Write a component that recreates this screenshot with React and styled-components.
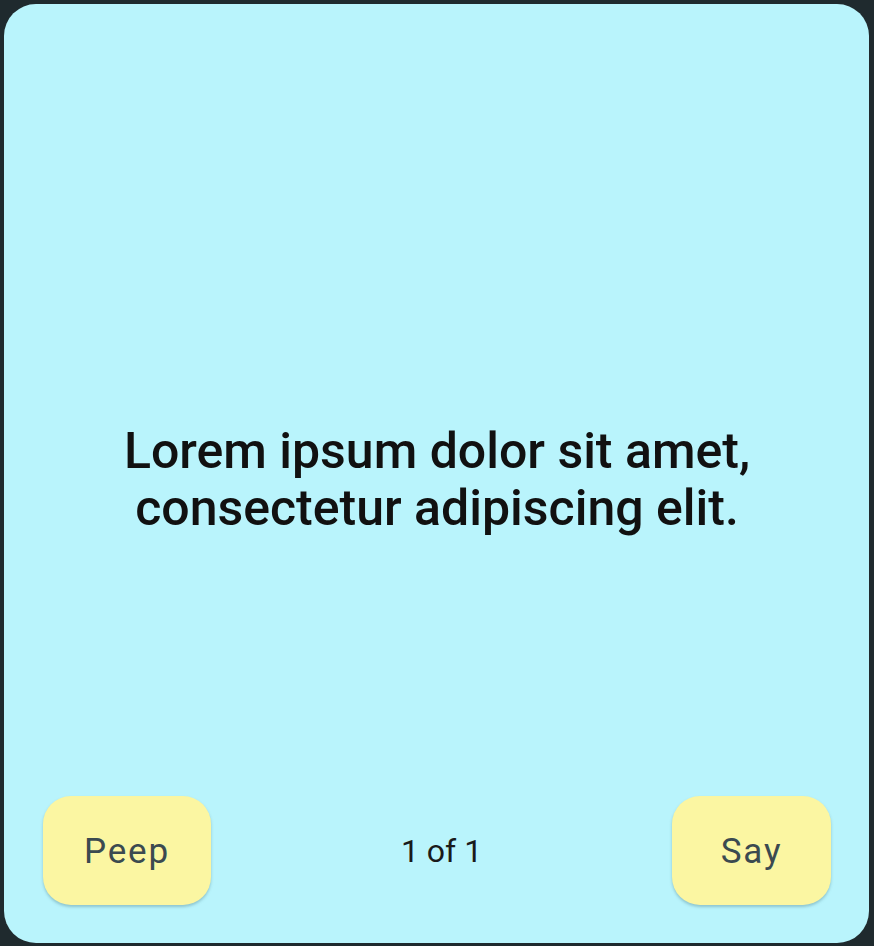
import React from "react";
import styled, { createGlobalStyle } from "styled-components";

const Global = createGlobalStyle`
  html, body { margin: 0; padding: 0; background: #1f2a2e; }
  body { font-family: Roboto, "Noto Sans", sans-serif; }
  #root { padding: 4px 5px 3px 4px; }
`;

const Card = styled.div`
  height: 939px;
  box-sizing: border-box;
  background: #b9f4fc;
  border-radius: 32px;
  padding: 38px 38px 38px 39px;
  display: flex;
  flex-direction: column;
`;

const Spacer = styled.div`
  height: 122px;
  flex: none;
`;

const Body = styled.div`
  flex: 1;
  display: flex;
  align-items: center;
  justify-content: center;
  text-align: center;
  font-size: 50px;
  font-weight: 500;
  line-height: 57px;
  color: #111;
`;

const Footer = styled.div`
  display: flex;
  align-items: center;
  justify-content: space-between;
`;

const Button = styled.button`
  height: 109px;
  width: ${(p) => p.$w}px;
  border: none;
  border-radius: 28px;
  background: #fbf6a2;
  color: #3b4a50;
  font-family: Roboto, sans-serif;
  font-size: 35px;
  font-weight: 400;
  letter-spacing: 1.8px;
  padding-top: 2px;
  box-shadow: 0 2px 3px rgba(60, 110, 120, 0.35);
  cursor: pointer;
`;

const Counter = styled.div`
  font-size: 32px;
  color: #1a1a1a;
`;

export default function App() {
  return (
    <>
      <Global />
      <Card>
        <Spacer />
        <Body>
          Lorem ipsum dolor sit amet,
          <br />
          consectetur adipiscing elit.
        </Body>
        <Footer>
          <Button $w={168}>Peep</Button>
          <Counter>1 of 1</Counter>
          <Button $w={159}>Say</Button>
        </Footer>
      </Card>
    </>
  );
}
